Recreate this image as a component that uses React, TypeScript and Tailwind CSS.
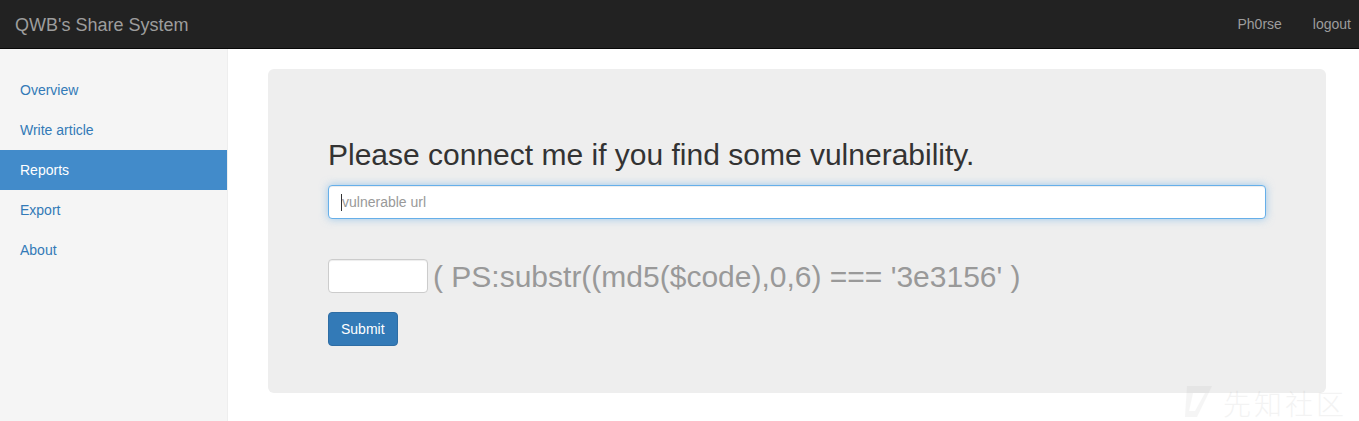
import React from "react";

export default function App() {
  const font = { fontFamily: '"Liberation Sans", Arial, "Noto Sans CJK SC", sans-serif' };
  return (
    <div className="relative w-[1359px] h-[421px] overflow-hidden bg-white text-[14px] text-[#333]" style={font}>
      <nav className="h-[49px] bg-[#222] border-b border-[#080808] flex items-center justify-between pl-[15px] pt-[1px]">
        <span className="text-[18px] text-[#9d9d9d] leading-[20px]">QWB's Share System</span>
        <div className="flex h-full items-center text-[#9d9d9d] text-[14px]">
          <span className="px-[15px]">Ph0rse</span>
          <span className="pl-[16px] pr-[8px]">logout</span>
        </div>
      </nav>
      <div className="flex h-[372px]">
        <aside className="w-[228px] shrink-0 bg-[#f5f5f5] border-r border-[#eee] pt-[21px]">
          {["Overview", "Write article", "Reports", "Export", "About"].map((t) => (
            <div
              key={t}
              className={
                "h-[40px] px-[20px] flex items-center leading-[20px] " +
                (t === "Reports" ? "bg-[#428bca] text-white" : "text-[#337ab7]")
              }
            >
              {t}
            </div>
          ))}
        </aside>
        <main className="flex-1 pl-[40px] pr-[33px] pt-[20px]">
          <div className="bg-[#eee] rounded-[6px] h-[324px] px-[60px] pt-[69px]">
            <h2 className="text-[30px] leading-[33px] text-[#333] m-0">Please connect me if you find some vulnerability.</h2>
            <div className="mt-[14px] h-[34px] bg-white border border-[#66afe9] rounded-[4px] shadow-[inset_0_1px_1px_rgba(0,0,0,0.075),0_0_8px_rgba(102,175,233,0.6)] flex items-center px-[12px]">
              <span className="w-px h-[17px] bg-[#333]"></span>
              <span className="text-[#999] text-[14px]">vulnerable url</span>
            </div>
            <div className="mt-[40px] flex items-center">
              <div className="w-[100px] h-[34px] bg-white border border-[#ccc] rounded-[4px] shadow-[inset_0_1px_1px_rgba(0,0,0,0.075)]"></div>
              <span className="ml-[5px] text-[30px] text-[#999] leading-[33px]">( PS:substr((md5($code),0,6) === '3e3156' )</span>
            </div>
            <div className="mt-[19px]">
              <button className="h-[34px] px-[12px] bg-[#337ab7] border border-[#2e6da4] rounded-[4px] text-white text-[14px]">Submit</button>
            </div>
          </div>
        </main>
      </div>
      <div className="absolute right-[12px] bottom-[3px] flex items-end gap-[10px] opacity-[0.06] pointer-events-none">
        <svg width="30" height="32" viewBox="0 0 30 32">
          <path d="M4 0 L29 0 L14 31 L2 31 Z" fill="#666" />
          <path d="M10 7 L22 7 L12 25 L6 25 Z" fill="#fff" />
        </svg>
        <span className="text-[28px] leading-[30px] text-[#444] tracking-[3px]" style={{ fontFamily: '"Noto Sans CJK SC", sans-serif', fontWeight: 300 }}>先知社区</span>
      </div>
    </div>
  );
}
